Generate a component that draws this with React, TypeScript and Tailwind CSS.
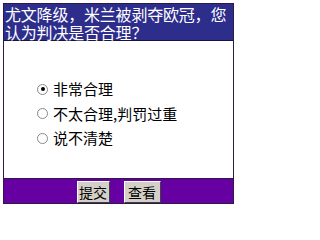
import { useState } from "react";

const options = ["非常合理", "不太合理,判罚过重", "说不清楚"];

const font = { fontFamily: '"Noto Sans CJK SC", "Noto Sans", sans-serif' };

export default function App() {
  const [choice, setChoice] = useState(0);

  return (
    <div className="w-[240px] h-[210px] bg-white pt-[3px] pl-[3px]" style={font}>
      <div className="w-[231px] h-[201px] border border-[#2a1a45] flex flex-col">
        <div className="h-[37px] bg-[#2d2d8c] border-b border-[#1a1240] text-white text-[16px] leading-[18px] pl-[1px] pt-[1px] tracking-[-0.2px]">
          尤文降级，米兰被剥夺欧冠，您认为判决是否合理？
        </div>
        <div className="flex-1 flex flex-col pt-[36px] pl-[33px]">
          {options.map((o, i) => (
            <label
              key={o}
              className="flex items-center h-[24.5px] text-[15px] text-black cursor-pointer"
              onClick={() => setChoice(i)}
            >
              <span className="w-[11px] h-[11px] rounded-full border border-[#8a8a8a] bg-white flex items-center justify-center mr-[5px]">
                {choice === i && <span className="w-[4px] h-[4px] rounded-full bg-black" />}
              </span>
              {o}
            </label>
          ))}
        </div>
        <div className="h-[25px] bg-[#6600a3] border-t border-[#2a1a45] flex justify-center gap-[14px] pt-[2px]">
          <button className="w-[33px] h-[22px] bg-[#d4d0c8] border border-t-white border-l-white border-b-[#404040] border-r-[#404040] text-[14px] leading-[18px] text-black">
            提交
          </button>
          <button className="w-[37px] h-[22px] bg-[#d4d0c8] border border-t-white border-l-white border-b-[#404040] border-r-[#404040] text-[14px] leading-[18px] text-black">
            查看
          </button>
        </div>
      </div>
    </div>
  );
}
